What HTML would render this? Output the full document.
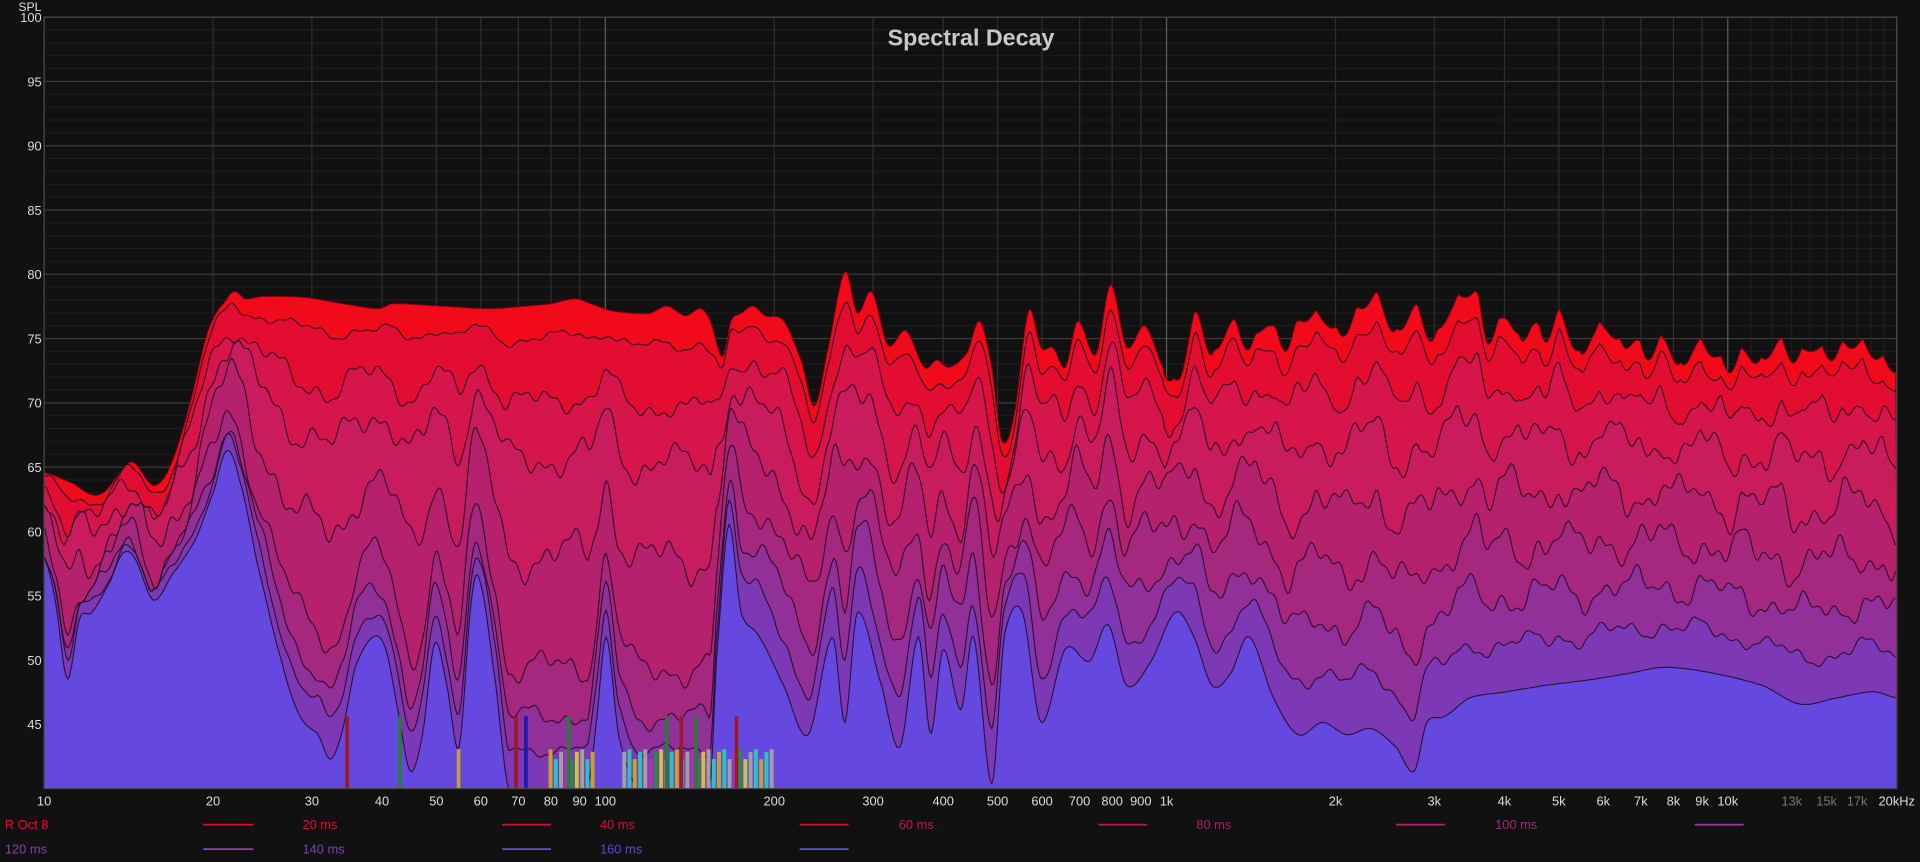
<!DOCTYPE html>
<html><head><meta charset="utf-8"><style>
html,body{margin:0;padding:0;background:#111;}
svg{display:block}
text{font-family:"Liberation Sans",sans-serif;}
</style></head><body>
<svg id="s" width="1920" height="862" viewBox="0 0 1568 704" preserveAspectRatio="none" xmlns="http://www.w3.org/2000/svg">
<rect x="0" y="0" width="1568" height="704" fill="#111"/>
<g id="grid"></g>
<g id="curves"></g>
<g id="bars"></g>
<rect x="36" y="14" width="1513" height="630" fill="none" stroke="#4a4a4a" stroke-width="1"/>
<text x="793" y="37" text-anchor="middle" font-size="19" font-weight="bold" fill="#c8c8c8">Spectral Decay</text>
<text x="15" y="9" font-size="10" fill="#ddd">SPL</text>
<g id="ylab" font-size="10.5" fill="#ddd" text-anchor="end"></g>
<g id="xlab" font-size="10.5" fill="#ddd" text-anchor="middle"></g>
<g font-size="10.5">
<text x="4" y="677" fill="#e0102a">R Oct 8</text>
<line x1="166" y1="673.5" x2="207" y2="673.5" stroke="#d0102a" stroke-width="1.5"/>
<text x="247" y="677" fill="#d8122c">20 ms</text>
<line x1="410" y1="673.5" x2="450" y2="673.5" stroke="#c8142e" stroke-width="1.5"/>
<text x="490" y="677" fill="#d01436">40 ms</text>
<line x1="653" y1="673.5" x2="693" y2="673.5" stroke="#c01838" stroke-width="1.5"/>
<text x="734" y="677" fill="#c8184a">60 ms</text>
<line x1="897" y1="673.5" x2="937" y2="673.5" stroke="#b01c48" stroke-width="1.5"/>
<text x="977" y="677" fill="#a82060">80 ms</text>
<line x1="1140" y1="673.5" x2="1180" y2="673.5" stroke="#a82468" stroke-width="1.5"/>
<text x="1221" y="677" fill="#a02a78">100 ms</text>
<line x1="1384" y1="673.5" x2="1424" y2="673.5" stroke="#9a38a0" stroke-width="1.5"/>
<text x="4" y="697" fill="#8a3cb0">120 ms</text>
<line x1="166" y1="693.5" x2="207" y2="693.5" stroke="#8a40b0" stroke-width="1.5"/>
<text x="247" y="697" fill="#7a42c0">140 ms</text>
<line x1="410" y1="693.5" x2="450" y2="693.5" stroke="#7048c8" stroke-width="1.5"/>
<text x="490" y="697" fill="#5c48d8">160 ms</text>
<line x1="653" y1="693.5" x2="693" y2="693.5" stroke="#5a50e0" stroke-width="1.5"/>
</g>
</svg>
<script>
(function(){
var NS="http://www.w3.org/2000/svg";
function el(p,t,a){var e=document.createElementNS(NS,t);for(var k in a)e.setAttribute(k,a[k]);p.appendChild(e);return e;}
var L=36,R=1549,T=14,B=644,PD=(R-L)/Math.log10(2000);
function fx(f){return L+Math.log10(f/10)*PD;}
function fy(d){return T+(100-d)*10.5;}
var g=document.getElementById('grid');
for(var d=41;d<=99;d++){var y=fy(d);el(g,'line',{x1:L,x2:R,y1:y,y2:y,stroke:d%5==0?'#3c3c3c':'#1f1f1f','stroke-width':d%5==0?1:0.8});}
var fr=[];[10,100,1000,10000].forEach(function(dec){for(var m=1;m<10;m++){var f=dec*m;if(f<=20000)fr.push(f);}});
fr.push(20000);
fr.forEach(function(f){var x=fx(f);var maj=(f==100||f==1000||f==10000);el(g,'line',{x1:x,x2:x,y1:T,y2:B,stroke:maj?'#5e5e5e':'#2e2e2e','stroke-width':1});});
[11000,12000,13000,14000,15000,16000,17000,18000,19000].forEach(function(f){var x=fx(f);el(g,'line',{x1:x,x2:x,y1:T,y2:B,stroke:'#222','stroke-width':0.8});});
var yl=document.getElementById('ylab');
for(var d=45;d<=100;d+=5){var t=el(yl,'text',{x:34,y:fy(d)+4});t.textContent=d;}
var xl=document.getElementById('xlab');
var labs=[[10,'10'],[20,'20'],[30,'30'],[40,'40'],[50,'50'],[60,'60'],[70,'70'],[80,'80'],[90,'90'],[100,'100'],[200,'200'],[300,'300'],[400,'400'],[500,'500'],[600,'600'],[700,'700'],[800,'800'],[900,'900'],[1000,'1k'],[2000,'2k'],[3000,'3k'],[4000,'4k'],[5000,'5k'],[6000,'6k'],[7000,'7k'],[8000,'8k'],[9000,'9k'],[10000,'10k'],[13000,'13k'],[15000,'15k'],[17000,'17k']];
labs.forEach(function(a){var t=el(xl,'text',{x:fx(a[0]),y:658});t.textContent=a[1];if(a[0]>10000)t.setAttribute('fill','#777');});
var t=el(xl,'text',{x:1549,y:658});t.textContent='20kHz';
var topP=[[36,386],[60,395],[75,404],[85,402],[95,390],[105,378],[112,380],[120,392],[128,396],[140,378],[155,330],[170,270],[185,245],[192,238],[200,244],[215,242],[250,243],[280,248],[310,252],[320,248],[360,250],[400,252],[430,250],[450,248],[470,244],[482,248],[500,254],[530,256],[545,250],[560,258],[572,252],[580,262],[590,292],[597,262],[605,256],[615,250],[625,258],[640,262],[655,296],[665,332],[675,290],[690,222],[700,256],[712,238],[725,282],[740,270],[755,300],[765,294],[775,300],[790,288],[800,262],[810,300],[818,360],[828,340],[840,254],[850,284],[860,284],[870,300],[880,262],[895,290],[907,232],[920,284],[935,266],[950,300],[962,310],[977,256],[990,290],[1005,262],[1020,282],[1035,262],[1050,282],[1062,260],[1080,258],[1095,272],[1110,252],[1125,242],[1140,272],[1155,250],[1170,276],[1185,250],[1205,238],[1215,276],[1230,256],[1242,278],[1252,262],[1262,276],[1274,256],[1290,290],[1300,272],[1312,266],[1325,282],[1335,276],[1345,290],[1360,276],[1372,300],[1385,280],[1400,288],[1412,300],[1425,286],[1438,296],[1452,278],[1465,292],[1480,282],[1495,290],[1505,282],[1520,280],[1535,292],[1549,300]];
var botP=[[36,455],[45,490],[55,555],[65,505],[75,500],[90,475],[100,452],[110,456],[125,490],[140,470],[160,440],[175,400],[185,368],[195,390],[210,460],[230,540],[245,585],[260,600],[270,620],[280,595],[290,545],[305,520],[315,530],[325,580],[335,630],[345,600],[355,525],[365,560],[375,610],[385,490],[392,475],[405,560],[415,644],[480,644],[487,590],[495,520],[505,600],[520,644],[580,644],[585,540],[595,428],[605,500],[620,520],[640,560],[660,600],[680,520],[690,590],[700,500],[720,560],[735,610],[750,520],[760,600],[770,530],[785,580],[795,520],[810,640],[820,520],[835,500],[850,590],[870,530],[890,540],[905,510],[920,560],[940,540],[960,500],[975,520],[990,560],[1005,550],[1020,520],[1040,570],[1060,600],[1080,590],[1100,600],[1120,595],[1140,610],[1155,630],[1165,590],[1180,585],[1200,570],[1230,565],[1260,560],[1300,555],[1330,550],[1360,545],[1400,550],[1440,560],[1470,575],[1500,570],[1530,565],[1549,570]];
function samp(pts){var out=[];for(var i=0;i<pts.length-1;i++){var p0=pts[Math.max(0,i-1)],p1=pts[i],p2=pts[i+1],p3=pts[Math.min(pts.length-1,i+2)];var n=Math.max(1,Math.round((p2[0]-p1[0])/1.5));for(var j=0;j<n;j++){var s=j/n,s2=s*s,s3=s2*s;var x=p1[0]+(p2[0]-p1[0])*s;var y=0.5*((2*p1[1])+(-p0[1]+p2[1])*s+(2*p0[1]-5*p1[1]+4*p2[1]-p3[1])*s2+(-p0[1]+3*p1[1]-3*p2[1]+p3[1])*s3);out.push([x,y]);}}out.push(pts[pts.length-1]);return out;}
var ts=samp(topP),bs=samp(botP);
function at(arr,x){for(var i=0;i<arr.length-1;i++){if(arr[i+1][0]>=x){var s=(x-arr[i][0])/((arr[i+1][0]-arr[i][0])||1);return arr[i][1]+(arr[i+1][1]-arr[i][1])*s;}}return arr[arr.length-1][1];}
var fl=[0,.07,.2,.32,.52,.75,.85,.92,1], frr=[0,.06,.17,.3,.45,.6,.74,.87,1];
var cols=['#f00a1a','#e20d30','#d6154a','#c81c5c','#b5216c','#a6277e','#92309a','#7d39b5','#6548e0'];
var curves=[];for(var k=0;k<9;k++)curves.push([]);
for(var x=L;x<=R;x+=1.5){var yt=Math.min(at(ts,x),B);if(x>950){yt+=Math.abs(Math.sin(x*0.19))*9-4;}var yb=Math.min(Math.max(at(bs,x),yt),B);var w=x<585?0:(x>600?1:(x-585)/15);var prev=yt;
for(var k=0;k<9;k++){var f=fl[k]*(1-w)+frr[k]*w;var y=yt+(yb-yt)*f;if(k>0&&k<8){y+=4*f*(1-f)*(12*Math.sin(x*0.09+k*1.7)+7*Math.sin(x*0.23+k*0.9)+4*Math.sin(x*0.51+k*2.3));}
y=Math.max(prev,Math.min(y,yb));if(k==8)y=yb;prev=y;curves[k].push([x,y]);}}
var cg=document.getElementById('curves');
function pd(c){return 'M'+c.map(function(p){return p[0].toFixed(1)+','+p[1].toFixed(1);}).join('L');}
for(var k=0;k<9;k++){el(cg,'path',{d:pd(curves[k])+'L'+R+','+B+'L'+L+','+B+'Z',fill:cols[k]});}
for(var k=0;k<9;k++){el(cg,'path',{d:pd(curves[k]),fill:'none',stroke:k==0?'#7a0010':'#1a0a20','stroke-width':0.9,'stroke-opacity':0.85});}
var bg=document.getElementById('bars');
var tall=[[282,'#9a1a2a'],[325,'#2a7a3a'],[420,'#9a1a2a'],[428,'#1a1ab0'],[463,'#2a7a3a'],[543,'#2a7a3a'],[555,'#9a1a2a'],[567,'#2a7a3a'],[600,'#9a1a2a']];
var sc=['#c8a030','#30c0c0','#a0a0a0','#b030b0','#2a8a4a','#d0c040','#a0a0a0','#30c0c0'];
var i=0;for(var x=448;x<632;x+=4.3,i++){if(x>485&&x<505)continue;var h=(i%3==0)?32:(i%3==1?24:30);el(bg,'rect',{x:x,y:B-h,width:3.2,height:h,fill:sc[i%sc.length]});}
el(bg,'rect',{x:373,y:612,width:3,height:32,fill:'#c8a030'});
tall.forEach(function(b){el(bg,'rect',{x:b[0],y:585,width:3,height:59,fill:b[1]});});
})();
</script>
</body></html>
